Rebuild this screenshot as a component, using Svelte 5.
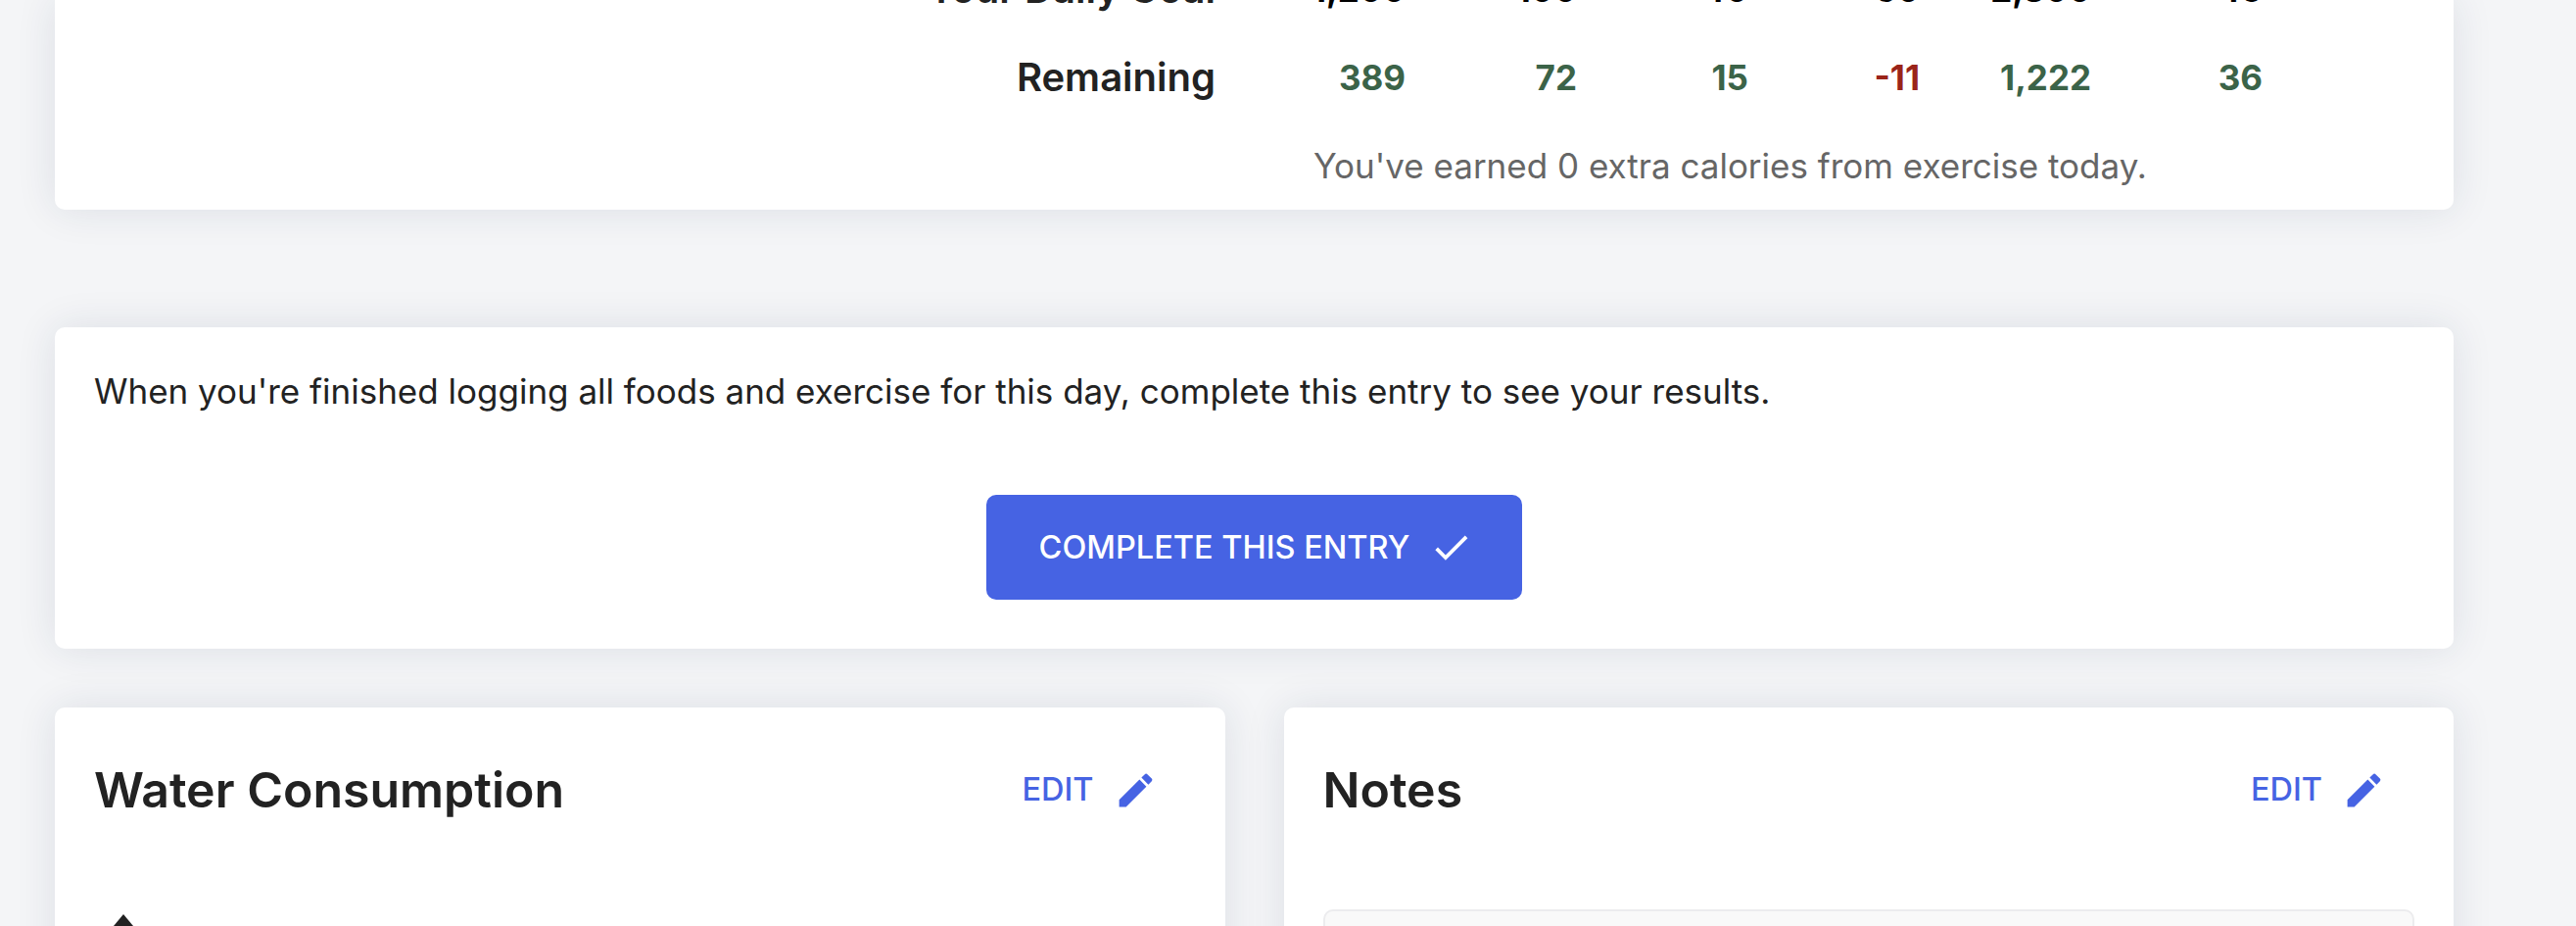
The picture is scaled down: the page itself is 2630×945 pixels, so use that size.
<script>
  const goal = ['1,200', '100', '40', '60', '2,300', '45'];
  const remaining = ['389', '72', '15', '-11', '1,222', '36'];
</script>

{#snippet pencil()}
  <svg class="pencil" viewBox="0 0 24 24"><path d="M3 17.25V21h3.75L17.81 9.94l-3.75-3.75L3 17.25zM20.71 7.04c.39-.39.39-1.02 0-1.41l-2.34-2.34c-.39-.39-1.02-.39-1.41 0l-1.83 1.83 3.75 3.75 1.83-1.83z" /></svg>
{/snippet}

<div class="page">
  <section class="card totals">
    <div class="row goal">
      <span class="label">Your Daily Goal</span>
      {#each goal as v}<span class="num">{v}</span>{/each}
    </div>
    <div class="row">
      <span class="label">Remaining</span>
      {#each remaining as v}<span class="num" class:neg={v.startsWith('-')}>{v}</span>{/each}
    </div>
    <p class="earned">You've earned 0 extra calories from exercise today.</p>
  </section>

  <section class="card complete">
    <p>When you're finished logging all foods and exercise for this day, complete this entry to see your results.</p>
    <button class="primary">
      <span>COMPLETE THIS ENTRY</span>
      <svg class="check" viewBox="0 0 24 24"><path d="M9 16.2 4.8 12l-1.4 1.4L9 19 21 7l-1.4-1.4z" /></svg>
    </button>
  </section>

  <div class="pair">
    <section class="card panel">
      <header>
        <h2>Water Consumption</h2>
        <button class="edit"><span>EDIT</span>{@render pencil()}</button>
      </header>
      <svg class="drop" viewBox="0 0 60 80"><path d="M30 0 L10 24 C-12 52 4 80 30 80 C56 80 72 52 50 24 Z" /></svg>
    </section>
    <section class="card panel">
      <header>
        <h2>Notes</h2>
        <button class="edit"><span>EDIT</span>{@render pencil()}</button>
      </header>
      <div class="note"></div>
    </section>
  </div>
</div>

<style>
  :global(body) { margin: 0; background: #f4f5f7; }
  .page {
    box-sizing: border-box;
    width: 2630px;
    height: 945px;
    overflow: hidden;
    padding: 0 125px 0 56px;
    font-family: Inter, sans-serif;
    font-size: 35px;
    color: #222;
    background: #f4f5f7;
  }
  p, h2 { margin: 0; }
  button { border: 0; background: none; padding: 0; font: inherit; display: flex; align-items: center; }
  .card {
    box-sizing: border-box;
    background: #fff;
    border-radius: 10px;
    box-shadow: 0 0 42px rgba(31, 45, 85, 0.11);
  }
  .totals { height: 214px; border-radius: 0 0 10px 10px; }
  .row {
    display: grid;
    grid-template-columns: 1185px 194px repeat(5, 175px);
    align-items: start;
    text-align: right;
    height: 90px;
    line-height: 50px;
  }
  .row.goal { height: 90px; margin-top: -36px; }
  .label { font-size: 40px; font-weight: 600; color: #222; }
  .num { font-weight: 700; color: #3b6348; }
  .goal .num { color: #000; }
  .num.neg { color: #9a2419; }
  .earned { padding-left: 1285px; line-height: 50px; color: #666; }
  .totals { display: flow-root; }
  .complete { height: 328px; margin-top: 120px; padding: 40px; display: flex; flex-direction: column; align-items: center; }
  .complete p { align-self: stretch; line-height: 50px; }
  .primary {
    box-sizing: border-box;
    width: 547px;
    height: 107px;
    margin-top: 81px;
    padding-left: 4px;
    justify-content: center;
    border-radius: 10px;
    background: #4663e3;
    color: #fff;
    font-size: 32.5px;
    font-weight: 500;
    gap: 20px;
  }
  .check { width: 45px; height: 45px; fill: #fff; }
  .pair { display: grid; grid-template-columns: 1fr 1fr; gap: 60px; margin-top: 60px; }
  .panel { height: 300px; padding: 40px; }
  header { display: flex; justify-content: space-between; align-items: center; height: 88px; }
  h2 { font-size: 50px; font-weight: 600; line-height: 60px; }
  .edit { color: #4663e3; font-size: 32.5px; font-weight: 500; line-height: 38px; gap: 20px; padding-right: 29px; }
  .pencil { width: 45px; height: 45px; fill: #4663e3; }
  .drop { display: block; width: 60px; height: 80px; margin-top: 83px; fill: #222; }
  .note { height: 120px; margin-top: 78px; border-radius: 10px; border: 2.5px solid #ececee; background: #f9f9f9; }
</style>
